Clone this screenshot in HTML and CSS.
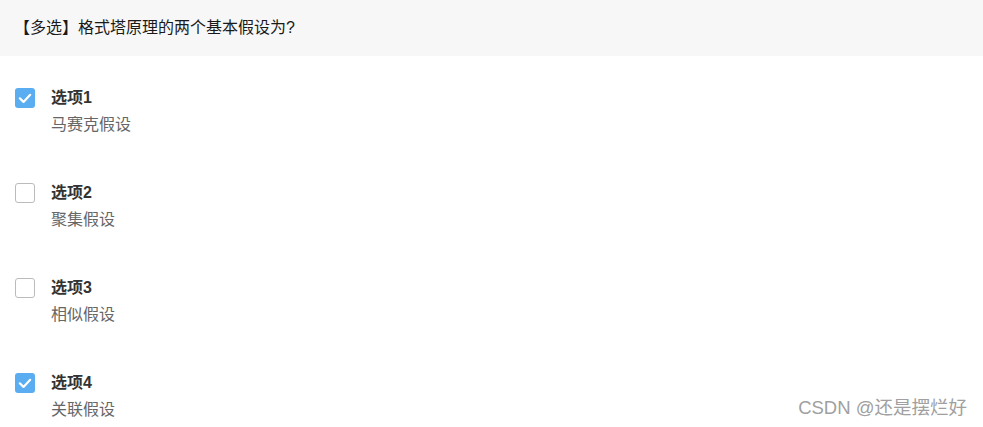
FILE: index.html
```html
<!DOCTYPE html>
<html lang="zh-CN">
<head>
  <meta charset="UTF-8" />
  <title>多选题</title>
  <link rel="stylesheet" href="styles.css">
</head>
<body>

  <header class="question">【多选】格式塔原理的两个基本假设为?</header>

  <ul class="options">
    <li class="option">
      <span class="check checked">
        <svg viewBox="0 0 20 20" width="20" height="20"><polyline points="4.8,10.3 8.5,13.9 15.2,6.8" /></svg>
      </span>
      <div class="option-text">
        <strong>选项1</strong>
        <p>马赛克假设</p>
      </div>
    </li>
    <li class="option">
      <span class="check"></span>
      <div class="option-text">
        <strong>选项2</strong>
        <p>聚集假设</p>
      </div>
    </li>
    <li class="option">
      <span class="check"></span>
      <div class="option-text">
        <strong>选项3</strong>
        <p>相似假设</p>
      </div>
    </li>
    <li class="option">
      <span class="check checked">
        <svg viewBox="0 0 20 20" width="20" height="20"><polyline points="4.8,10.3 8.5,13.9 15.2,6.8" /></svg>
      </span>
      <div class="option-text">
        <strong>选项4</strong>
        <p>关联假设</p>
      </div>
    </li>
  </ul>

  <div class="watermark">CSDN @还是摆烂好</div>

</body>
</html>
```

FILE: styles.css
```css
/* Reset */
* {
  margin: 0; padding: 0; box-sizing: border-box;
  font-family: 'Liberation Sans', 'Noto Sans CJK SC', sans-serif;
}

body {
  background: #fff;
  color: #222;
  font-size: 16px;
  position: relative;
  height: 100vh;
  overflow: hidden;
}

/* Question header */
.question {
  background: #f7f7f7;
  height: 56px;
  line-height: 56px;
  padding: 0 14px;
  font-size: 16px;
  color: #1a1a1a;
}

/* Options */
.options {
  list-style: none;
  padding: 32px 0 0 15px;
}
.option {
  display: flex;
  gap: 16px;
  height: 48px;
  margin-bottom: 47px;
}
.option:last-child {
  margin-bottom: 0;
}
.check {
  width: 20px;
  height: 20px;
  flex: none;
  border: 1px solid #bbb;
  border-radius: 3px;
  background: #fff;
}
.check.checked {
  border: none;
  background: #5aadf0;
}
.check svg {
  display: block;
}
.check polyline {
  fill: none;
  stroke: #fff;
  stroke-width: 2.2;
  stroke-linecap: round;
  stroke-linejoin: round;
}
.option-text strong {
  display: block;
  height: 20px;
  line-height: 20px;
  font-weight: 700;
  color: #333;
}
.option-text p {
  margin-top: 7px;
  height: 20px;
  line-height: 20px;
  color: #666;
}

/* Watermark */
.watermark {
  position: absolute;
  right: 16px;
  bottom: 8px;
  font-size: 18.5px;
  color: #a0a0a0;
}
```
